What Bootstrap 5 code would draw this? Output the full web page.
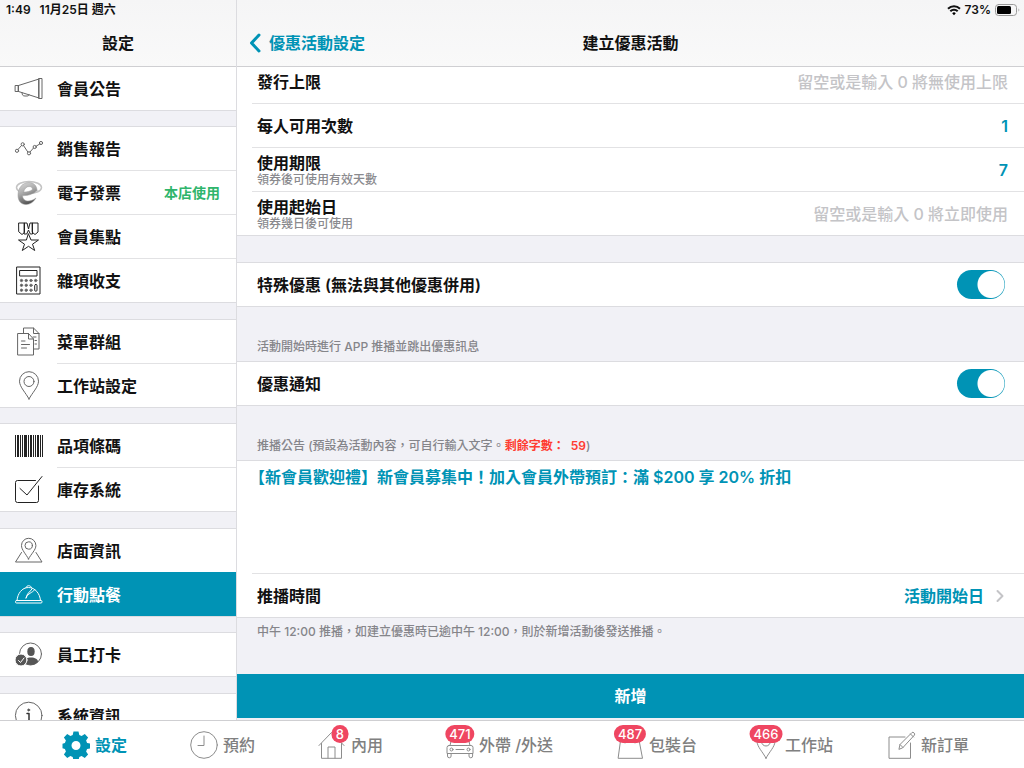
<!DOCTYPE html>
<html lang="zh-Hant">
<head>
<meta charset="utf-8">
<meta name="viewport" content="width=device-width, initial-scale=1">
<title>建立優惠活動</title>
<link href="https://cdn.jsdelivr.net/npm/bootstrap@5.3.0/dist/css/bootstrap.min.css" rel="stylesheet">
<style>
:root { --teal: #0093b5; --line: #dcdce0; --ground: #f1f1f6; }
body { font: 500 16px/20px Inter, "Noto Sans CJK TC", sans-serif; color: #111; background: #fff; }
a { text-decoration: none; color: inherit; }
svg { display: block; fill: none; stroke: currentColor; stroke-linecap: round; stroke-linejoin: round; flex: none; }
.teal { color: var(--teal); }
.side { width: 237px; flex: none; border-right: 1px solid var(--line); background: var(--ground); }
.top-bar { height: 67px; flex: none; background: linear-gradient(#f5f5f6, #f9f9f9); border-bottom: 1px solid #cfcfd2; }
.status-line { height: 19px; font-size: 12px; font-weight: 600; }
.clock { padding: 0 9px 0 6px; }
.title-line { height: 47px; }
.title-grid { display: grid; grid-template-columns: 1fr auto 1fr; align-items: center; }
.title-line, .strong-text { font-weight: 600; }
/* sidebar menu */
.menu-group { background: #fff; border-bottom: 1px solid var(--line); margin-bottom: 15px; flex: none; }
.menu-group + .menu-group { border-top: 1px solid var(--line); }
.menu-group:nth-child(even) { margin-bottom: 16px; }
.menu-item { font-weight: 600; padding-left: 14px; gap: 14px; color: #111; }
.menu-item svg { width: 29px; height: 29px; color: #666; stroke-width: 1; }
.menu-item svg.ink { color: #222; }
.menu-text { height: 43px; padding-right: 16px; }
.menu-item + .menu-item .menu-text { height: 44px; border-top: 1px solid #e2e2e4; }
.menu-item.current { background: var(--teal); color: #fff; }
.menu-item.current svg { color: #fff; }
.menu-item.current .menu-text { border-color: var(--teal) !important; }
.in-use { color: #2fb56c; font-size: 14px; font-weight: 600; }
/* form */
.pane { background: var(--ground); }
.scrolled { margin-top: -7px; }
.sheet { background: #fff; border-bottom: 1px solid var(--line); }
.sheet-top { border-top: 1px solid var(--line); }
.line-row { height: 43px; margin-left: 15px; padding: 0 16px 0 5px; }
.line-row + .line-row, .ruled { height: 44px; border-top: 1px solid #e2e2e4; }
.line-row label { font-weight: 600; }
.line-row input[type=text] { border: 0; outline: 0; background: none; text-align: right; color: var(--teal); padding: 0; font-weight: 600; }
.line-row input::placeholder { color: #c4c4c7; opacity: 1; font-weight: 500; }
.hint { color: #8a8a8e; font-size: 12px; line-height: 14px; }
.caption { color: #85858a; font-size: 12px; height: 54px; padding: 0 20px 4px; line-height: 20px; }
.footnote { padding: 4px 20px; height: auto; }
.gap-band { height: 26px; }
.red { color: #ff3b30; font-weight: 600; }
.toggle { appearance: none; width: 48px; height: 29px; border-radius: 15px; margin: 0 3px 0 0; background: radial-gradient(circle at 34px 50%, #fff 13px, var(--teal) 14px); }
.notice { height: 112px; border: 0; outline: 0; resize: none; color: var(--teal); padding: 6px 12px; display: block; width: 100%; font-weight: 600; }
.pick { border: 0; background: none; padding: 0; color: var(--teal); font-weight: 600; }
.pick svg { color: #c4c4c7; }
.submit { height: 44px; border: 0; background: var(--teal); color: #fff; margin-bottom: 2px; font-weight: 600; flex: none; }
/* tabs */
.tab-bar { height: 48px; border-top: 1px solid #cfcfd2; flex: none; color: #808080; background: #fff; padding: 0 55px 0 62px; }
.tab-link { gap: 5px; }
.tab-link:nth-child(n+6) { margin-left: -8px; }
.tab-link svg { width: 28px; height: 28px; stroke-width: 1; color: #8c8c8c; }
.tab-link.teal svg { color: var(--teal); }
.count { position: absolute; top: -6px; left: 50%; transform: translateX(-50%); background: #ef4661; color: #fff; font-size: 13px; font-weight: 500; line-height: 18px; height: 18px; min-width: 17px; padding: 0 4px; border-radius: 9px; text-align: center; }
.count.single { left: 22px; }
</style>
</head>
<body>
<div class="vh-100 d-flex flex-column overflow-hidden">
  <div class="d-flex flex-fill overflow-hidden">
    <aside class="side d-flex flex-column">
      <header class="top-bar">
        <div class="status-line d-flex align-items-center"><span class="clock">1:49</span><span>11月25日 週六</span></div>
        <div class="title-line d-flex align-items-center justify-content-center">設定</div>
      </header>
      <nav class="flex-fill overflow-hidden d-flex flex-column">
        <div class="menu-group">
          <a href="#" class="menu-item d-flex align-items-center">
            <svg viewBox="0 0 29 29"><path d="M4.500 11.500 25 5v19L4.500 17.500zM25 4.500h3v20h-3zM1.500 11.500h3v6h-3zM8 18.700c0 2.500 1 3.300 3 3.300h2c1.500 0 2-.6 2-1.500"/></svg>
            <span class="menu-text flex-fill d-flex align-items-center">會員公告</span></a>
        </div>
        <div class="menu-group">
          <a href="#" class="menu-item d-flex align-items-center">
            <svg viewBox="0 0 29 29"><path d="m4 15.500 3.500-4M9.500 11.500l4.300 6.500M16 18l3.500-4M22 12.300l4-2.500"/><circle cx="3" cy="16.800" r="1.600"/><circle cx="8.700" cy="10.300" r="1.600"/><circle cx="15" cy="19.300" r="1.600"/><circle cx="20.700" cy="13" r="1.600"/><circle cx="27" cy="9" r="1.600"/></svg>
            <span class="menu-text flex-fill d-flex align-items-center">銷售報告</span></a>
          <a href="#" class="menu-item d-flex align-items-center">
            <svg viewBox="0 0 29 29"><defs><linearGradient id="silver" x2=".4" y2="1"><stop stop-color="#ddd"/><stop offset=".5" stop-color="#aaa"/><stop offset="1" stop-color="#555"/></linearGradient></defs><ellipse cx="15" cy="9.500" rx="12.500" ry="6" stroke="#c4c4c4" stroke-width="1.500"/><path d="M23 12.500c0-5-3.500-8-8-8C8.500 4.500 4 10 4 17c0 6 3 9.500 8 9.500 4 0 7.500-2.300 10-6.500-3 2.300-5.500 3-8 3-3.500 0-5.300-2.300-5.500-5.500C13 18 19 16.500 23 12.500zM9.500 14c1-3.300 3-5.500 5.500-5.500 2.300 0 3.500 1.300 3.500 3-2.500 2-5.500 2.500-9 2.500z" fill="url(#silver)" stroke="#999" stroke-width=".5"/></svg>
            <span class="menu-text flex-fill d-flex align-items-center justify-content-between">電子發票<span class="in-use">本店使用</span></span></a>
          <a href="#" class="menu-item d-flex align-items-center">
            <svg class="ink" viewBox="0 0 29 29"><path d="M5 1h5.500v9.500L8 12.500l-3-2.500zM18.500 1H24v9l-3 2.500-2.500-2zM10.500 1H13l1.500 6L16 1h2.500v11h-2.200l-1.800-4-1.800 4h-2.200zM14.500 12l2.500 6h7.500l-6 4.200 2.200 6.300-6.200-4.200-6.200 4.200 2.200-6.300-6-4.200H12z"/></svg>
            <span class="menu-text flex-fill d-flex align-items-center">會員集點</span></a>
          <a href="#" class="menu-item d-flex align-items-center">
            <svg class="ink" viewBox="0 0 29 29"><path d="M3 1h23v27H3zM6 4.500h17V10H6z"/><g fill="#555" stroke="#777"><circle cx="7.500" cy="14.500" r="1.200"/><circle cx="12.200" cy="14.500" r="1.200"/><circle cx="17" cy="14.500" r="1.200"/><circle cx="21.700" cy="14.500" r="1.200"/><circle cx="7.500" cy="19.300" r="1.200"/><circle cx="12.200" cy="19.300" r="1.200"/><circle cx="17" cy="19.300" r="1.200"/><circle cx="7.500" cy="24.200" r="1.200"/><circle cx="12.200" cy="24.200" r="1.200"/><circle cx="17" cy="24.200" r="1.200"/></g><rect x="20.700" y="18.500" width="2.300" height="6.700" rx="1"/></svg>
            <span class="menu-text flex-fill d-flex align-items-center">雜項收支</span></a>
        </div>
        <div class="menu-group">
          <a href="#" class="menu-item d-flex align-items-center">
            <svg viewBox="0 0 29 29"><path d="M4 6.500h10.500l5 5.500v16H4zM14.500 6.500V12h5M7.500 14H11M7.500 17.500h8M7.500 21h5M9.500 6.500V1h10l5.500 5.500V22h-5.500M19.500 1v5.500H25M19 10h3M21 13.500h1.500M21 17h1.500"/></svg>
            <span class="menu-text flex-fill d-flex align-items-center">菜單群組</span></a>
          <a href="#" class="menu-item d-flex align-items-center">
            <svg viewBox="0 0 29 29"><path d="M15 28C12 22 5.500 16 5.500 10.200a9.500 9.500 0 0 1 19 0C24.500 16 18 22 15 28z"/><circle cx="15" cy="10.500" r="5"/></svg>
            <span class="menu-text flex-fill d-flex align-items-center">工作站設定</span></a>
        </div>
        <div class="menu-group">
          <a href="#" class="menu-item d-flex align-items-center">
            <svg class="ink" viewBox="0 0 29 29"><g fill="currentColor" stroke="none"><path d="M1 4h1v22H1zM3 4h2v22H3zM6 4h1v22H6zM8 4h1v22H8zM10 4h3v22h-3zM14 4h1v22h-1zM16 4h2v22h-2zM19 4h1v22h-1zM21 4h1v22h-1zM23 4h2v22h-2zM26 4h1v22h-1zM28 4h1v22h-1z"/></g></svg>
            <span class="menu-text flex-fill d-flex align-items-center">品項條碼</span></a>
          <a href="#" class="menu-item d-flex align-items-center">
            <svg class="ink" viewBox="0 0 29 29"><path d="M21.500 5.500h-18a2 2 0 0 0-2 2v18a2 2 0 0 0 2 2h19a2 2 0 0 0 2-2V11M6 13.500l7 6.500L28 1.500"/></svg>
            <span class="menu-text flex-fill d-flex align-items-center">庫存系統</span></a>
        </div>
        <div class="menu-group">
          <a href="#" class="menu-item d-flex align-items-center">
            <svg viewBox="0 0 29 29"><path d="M14.500 23C12 18 7.500 14 7.500 9.500a7.200 7.200 0 0 1 14.400 0C21.900 14 17 18 14.500 23zM7.500 16.500 1.500 26h26.500l-6-9.500"/><circle cx="14.700" cy="9.500" r="3.700"/></svg>
            <span class="menu-text flex-fill d-flex align-items-center">店面資訊</span></a>
          <a href="#" class="menu-item current d-flex align-items-center" aria-current="page">
            <svg viewBox="0 0 29 29"><rect x="1.500" y="20.500" width="26.500" height="2.500" rx="1"/><path d="M3 20.500c.5-7 5-13 11.500-13s11.500 6 12 13M12 7.500c.5-2.500 5-2.500 5.500 0M12 18c.5-4.500 4-6 6-9M12 18c2-5 6-5 8.500-8"/></svg>
            <span class="menu-text flex-fill d-flex align-items-center">行動點餐</span></a>
        </div>
        <div class="menu-group">
          <a href="#" class="menu-item d-flex align-items-center">
            <svg viewBox="0 0 29 29"><circle cx="16.500" cy="14" r="11"/><g fill="#555" stroke="none"><ellipse cx="17" cy="11.500" rx="3.700" ry="4.500"/><path d="M10 22c0-3 3-4.500 7-4.500s7 1.500 7 4.500c-2 2-4.500 3-7 3s-5.500-1-7-3z"/><circle cx="7" cy="20" r="6" stroke="#fff"/></g><path stroke="#fff" d="m4.500 20.500 2 2 3.500-4.500"/></svg>
            <span class="menu-text flex-fill d-flex align-items-center">員工打卡</span></a>
        </div>
        <div class="menu-group">
          <a href="#" class="menu-item d-flex align-items-center">
            <svg viewBox="0 0 29 29"><circle cx="14.700" cy="14.500" r="13.300"/><circle cx="14.700" cy="9" r="1" fill="#333"/><path stroke="#333" stroke-width="1.500" d="M13 12.500h2V20M12.500 20h5"/></svg>
            <span class="menu-text flex-fill d-flex align-items-center">系統資訊</span></a>
        </div>
      </nav>
    </aside>
    <main class="pane flex-fill d-flex flex-column overflow-hidden">
      <header class="top-bar">
        <div class="status-line d-flex align-items-center justify-content-end gap-1 pe-1">
          <svg width="14" height="12" viewBox="0 0 14 12" stroke-width="2"><path style="stroke-linecap:butt" d="M1 4.700a8.500 8.500 0 0 1 12 0M3.300 7.300a5.200 5.200 0 0 1 7.400 0"/><path d="m5.200 9.300 1.800 2 1.800-2a2.500 2.500 0 0 0-3.600 0z" fill="#000" stroke="none"/></svg>
          <span>73%</span>
          <svg width="25" height="12" viewBox="0 0 25 12"><rect x=".5" y=".5" width="21" height="11" rx="3" stroke="#999"/><rect x="2" y="2" width="14" height="8" rx="1.500" fill="#000" stroke="none"/><path d="M23.500 4.500c1 .3 1 2.700 0 3z" fill="#999" stroke="none"/></svg>
        </div>
        <div class="title-line title-grid">
          <a href="#" class="teal d-flex align-items-center gap-2 ps-2 ms-1"><svg width="12" height="20" viewBox="0 0 12 20" stroke-width="3"><path d="M10 2 2.500 10l7.500 8"/></svg>優惠活動設定</a>
          <span>建立優惠活動</span>
        </div>
      </header>
      <form class="flex-fill overflow-hidden" id="promo">
        <div class="sheet scrolled">
          <div class="line-row d-flex align-items-center"><label for="cap">發行上限</label><input class="flex-fill" type="text" id="cap" placeholder="留空或是輸入 0 將無使用上限"></div>
          <div class="line-row d-flex align-items-center"><label for="each">每人可用次數</label><input class="flex-fill" type="text" id="each" value="1"></div>
          <div class="line-row d-flex align-items-center"><div><label class="d-block" for="valid">使用期限</label><div class="hint">領券後可使用有效天數</div></div><input class="flex-fill" type="text" id="valid" value="7"></div>
          <div class="line-row d-flex align-items-center"><div><label class="d-block" for="start">使用起始日</label><div class="hint">領券幾日後可使用</div></div><input class="flex-fill" type="text" id="start" placeholder="留空或是輸入 0 將立即使用"></div>
        </div>
        <div class="gap-band"></div>
        <div class="sheet sheet-top"><div class="line-row d-flex align-items-center justify-content-between"><label for="special">特殊優惠 (無法與其他優惠併用)</label><input class="toggle" type="checkbox" role="switch" id="special" checked></div></div>
        <div class="caption d-flex align-items-end">活動開始時進行 APP 推播並跳出優惠訊息</div>
        <div class="sheet sheet-top"><div class="line-row d-flex align-items-center justify-content-between"><label for="notify">優惠通知</label><input class="toggle" type="checkbox" role="switch" id="notify" checked></div></div>
        <div class="caption d-flex align-items-end"><label for="notice">推播公告 (預設為活動內容，可自行輸入文字。<span class="red">剩餘字數：&nbsp; 59</span>)</label></div>
        <div class="sheet sheet-top">
          <textarea class="notice" id="notice">【新會員歡迎禮】新會員募集中！加入會員外帶預訂：滿 $200 享 20% 折扣</textarea>
          <div class="line-row ruled d-flex align-items-center justify-content-between"><label for="when">推播時間</label><button type="button" id="when" class="pick d-flex align-items-center gap-2">活動開始日<svg class="mx-1" width="8" height="14" viewBox="0 0 8 14" stroke-width="2"><path d="m1.500 2 5 5-5 5"/></svg></button></div>
        </div>
        <div class="caption footnote">中午 12:00 推播，如建立優惠時已逾中午 12:00，則於新增活動後發送推播。</div>
      </form>
      <button class="submit" type="submit" form="promo">新增</button>
    </main>
  </div>
  <nav class="tab-bar d-flex align-items-center justify-content-between">
    <a href="#" class="tab-link teal strong-text d-flex align-items-center" aria-current="page">
      <svg viewBox="0 0 28 28"><path fill="currentColor" stroke="none" fill-rule="evenodd" d="M11.500.5h5l.8 3.600 2.300 1 3.200-2 3.300 3.300-2 3.200 1 2.300 3.400.8v4.600l-3.400.8-1 2.300 2 3.200-3.300 3.300-3.200-2-2.300 1-.8 3.600h-5l-.8-3.600-2.300-1-3.200 2L1.900 23.600l2-3.200-1-2.300-2.400-.8v-4.600l2.400-.8 1-2.300-2-3.200 3.300-3.300 3.200 2 2.300-1zM14 10a4.500 4.500 0 1 0 0 9 4.500 4.500 0 0 0 0-9z"/></svg>設定</a>
    <a href="#" class="tab-link d-flex align-items-center"><svg viewBox="0 0 28 28"><circle cx="14" cy="14" r="13.300"/><path d="M14 5v9.500H8"/></svg>預約</a>
    <a href="#" class="tab-link d-flex align-items-center"><span class="position-relative"><svg viewBox="0 0 28 28"><path d="M1 14.500 13.500 1.500 26 14.500M3.500 12.500V27.300h20V12.500M10 27V16h7v11"/></svg><span class="count single">8</span></span>內用</a>
    <a href="#" class="tab-link d-flex align-items-center"><span class="position-relative"><svg viewBox="0 0 28 28"><path d="M4 14.500 6 6h16l2 8.500M3 14.500h22a2 2 0 0 1 2 2v6H1v-6a2 2 0 0 1 2-2zM1.500 22.500V25a1.800 1.800 0 0 0 3.600 0v-2.500M23 22.500V25a1.800 1.800 0 0 0 3.600 0v-2.500M10 18.500h8"/><circle cx="5.500" cy="18.500" r="1.500"/><circle cx="22.500" cy="18.500" r="1.500"/></svg><span class="count">471</span></span>外帶 /外送</a>
    <a href="#" class="tab-link d-flex align-items-center"><span class="position-relative"><svg viewBox="0 0 28 28"><path d="M5 9h18l3.500 18.300h-24zM9 12V6a5 5 0 0 1 10 0v6"/></svg><span class="count">487</span></span>包裝台</a>
    <a href="#" class="tab-link d-flex align-items-center"><span class="position-relative"><svg viewBox="0 0 28 28"><path d="M14 27.300C11 21 5 16 5 10a9 9 0 0 1 18 0c0 6-6 11-9 17.300z"/><circle cx="14" cy="10.500" r="4.500"/></svg><span class="count">466</span></span>工作站</a>
    <a href="#" class="tab-link d-flex align-items-center"><svg viewBox="0 0 28 28"><path d="M17 6H1v21.300h21.500V12M11 18l1-4.500L24 1.500c1-1 3.500 1.200 2.500 2.500L15 16.500zM12 13.500l3 3M22.500 3l3 3"/></svg>新訂單</a>
  </nav>
</div>
<script src="https://cdn.jsdelivr.net/npm/bootstrap@5.3.0/dist/js/bootstrap.bundle.min.js"></script>
</body>
</html>
